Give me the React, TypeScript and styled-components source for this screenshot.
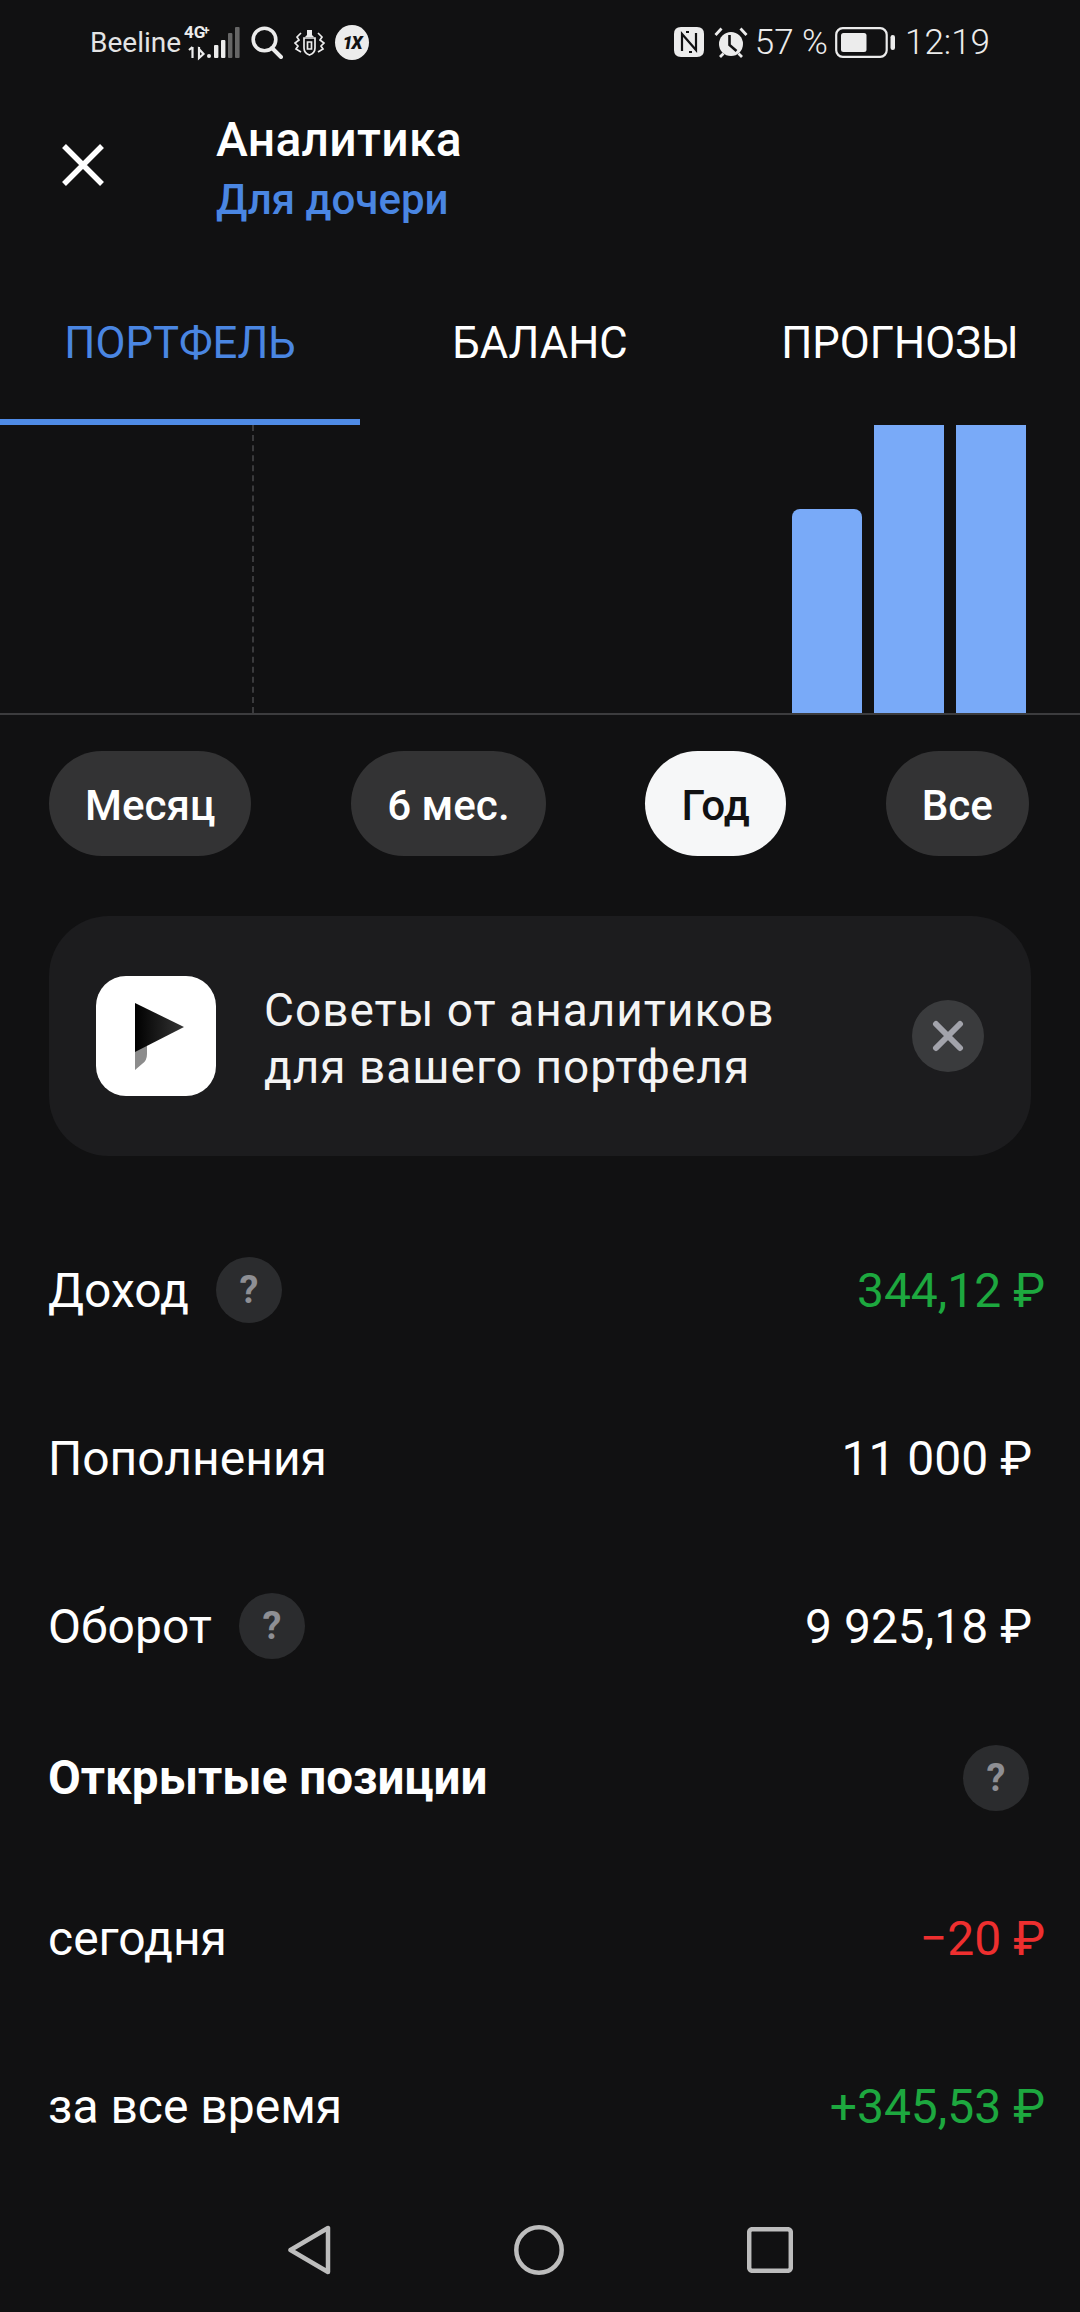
import React from 'react';
import styled, { createGlobalStyle } from 'styled-components';

const Global = createGlobalStyle`
  html, body { margin: 0; padding: 0; background: #111112; }
  * { box-sizing: border-box; }
`;

const Page = styled.div`
  width: 1080px;
  height: 2312px;
  background: #111112;
  color: #fff;
  font-family: Roboto, "Liberation Sans", sans-serif;
  display: flex;
  flex-direction: column;
  overflow: hidden;
`;

const StatusBar = styled.div`
  height: 84px;
  padding: 0 90px 0 90px;
  display: flex;
  align-items: center;
  justify-content: space-between;
  color: #ececec;
`;
const StatusGroup = styled.div`
  display: flex;
  align-items: center;
`;
const Carrier = styled.span`
  font-size: 28px;
  margin-right: 3px;
  color: #e4e4e4;
`;
const StatusText = styled.span`
  font-size: 35px;
  font-weight: 300;
  white-space: nowrap;
`;
const OneX = styled.span`
  width: 34px;
  height: 35px;
  margin-left: 10px;
  border-radius: 50%;
  background: #ececec;
  color: #111112;
  font-size: 18px;
  font-weight: 900;
  font-style: italic;
  letter-spacing: -1px;
  display: flex;
  align-items: center;
  justify-content: center;
`;

const Header = styled.div`
  height: 176px;
  display: flex;
  align-items: center;
  padding-left: 62px;
`;
const CloseSlot = styled.div`
  margin-top: -14px;
  display: flex;
`;
const HeaderTitles = styled.div`
  margin-left: 112px;
  margin-top: -7px;
  display: flex;
  flex-direction: column;
  gap: 9px;
`;
const Title = styled.div`
  font-size: 48px;
  font-weight: 500;
  line-height: 54px;
  letter-spacing: 0.3px;
`;
const Subtitle = styled.div`
  font-size: 42px;
  font-weight: 500;
  line-height: 48px;
  color: #4a86e2;
`;

const Tabs = styled.div`
  height: 165px;
  display: grid;
  grid-template-columns: repeat(3, 360px);
`;
const Tab = styled.div<{ $active?: boolean }>`
  display: flex;
  align-items: center;
  justify-content: center;
  padding-top: 8px;
  font-size: 43.6px;
  color: ${p => (p.$active ? '#4a86e2' : '#fff')};
  border-bottom: 6px solid ${p => (p.$active ? '#4f8be6' : 'transparent')};
`;

const Chart = styled.div`
  position: relative;
  height: 290px;
  padding-right: 54px;
  display: flex;
  justify-content: flex-end;
  align-items: flex-end;
  gap: 12px;
  border-bottom: 2px solid #3c3c3e;
`;
const Dashed = styled.div`
  position: absolute;
  left: 252px;
  top: 0;
  bottom: 0;
  border-left: 2px dashed #3a3a3c;
`;
const Bar = styled.div<{ $h: number; $round?: boolean }>`
  width: 70px;
  height: ${p => p.$h}px;
  background: #79aaf8;
  border-radius: ${p => (p.$round ? '8px 8px 0 0' : '0')};
`;

const Pills = styled.div`
  margin-top: 36px;
  padding: 0 51px 0 49px;
  display: flex;
  justify-content: space-between;
`;
const Pill = styled.div<{ $active?: boolean }>`
  height: 105px;
  padding: 3px 36px 0;
  border-radius: 53px;
  display: flex;
  align-items: center;
  font-size: 42.2px;
  font-weight: 500;
  background: ${p => (p.$active ? '#f6f7f8' : '#333334')};
  color: ${p => (p.$active ? '#111112' : '#fff')};
`;

const Card = styled.div`
  margin: 60px 49px 0;
  height: 240px;
  border-radius: 60px;
  background: #1c1c1e;
  padding: 0 47px;
  display: flex;
  align-items: center;
`;
const AppIcon = styled.div`
  width: 120px;
  height: 120px;
  border-radius: 30px;
  background: #fff;
  flex: none;
  display: flex;
  align-items: center;
  justify-content: center;
`;
const CardText = styled.div`
  margin-left: 48px;
  padding-top: 5px;
  flex: 1;
  font-size: 46px;
  line-height: 57px;
  color: #f4f4f4;
  letter-spacing: 1px;
`;
const CardClose = styled.div`
  width: 72px;
  height: 72px;
  border-radius: 50%;
  background: #3a3b3d;
  display: flex;
  align-items: center;
  justify-content: center;
`;

const Rows = styled.div`
  margin-top: 50px;
  padding: 0 48px 0 48px;
  display: flex;
  flex-direction: column;
`;
const Row = styled.div<{ $h?: number; $pb?: number }>`
  height: ${p => p.$h ?? 168}px;
  padding-bottom: ${p => p.$pb ?? 0}px;
  padding-right: ${p => (p.$pb ? 3 : 0)}px;
  display: flex;
  align-items: center;
  justify-content: space-between;
`;
const RowLabel = styled.div<{ $bold?: boolean }>`
  display: flex;
  align-items: center;
  gap: 27px;
  font-size: ${p => (p.$bold ? 47.6 : 48)}px;
  font-weight: ${p => (p.$bold ? 700 : 400)};
  letter-spacing: 0;
`;
const RowValue = styled.div<{ $color?: string; $shift?: boolean }>`
  font-size: 48px;
  color: ${p => p.$color ?? '#fff'};
  margin-right: ${p => (p.$shift ? -13 : 0)}px;
  white-space: nowrap;
`;
const Help = styled.span`
  width: 66px;
  height: 66px;
  border-radius: 50%;
  background: #2b2c2e;
  color: #8e8f94;
  font-size: 38px;
  font-weight: 700;
  display: inline-flex;
  align-items: center;
  justify-content: center;
`;

const NavBar = styled.div`
  margin-top: auto;
  height: 112px;
  display: flex;
  align-items: flex-start;
  justify-content: center;
  gap: 183px;
`;

const NavIcon = styled.svg<{ $top?: number }>`
  display: block;
  margin-top: ${p => p.$top ?? 25}px;
`;

const Signal = () => (
  <svg width="58" height="42" viewBox="0 -4 58 42">
    <text x="0" y="13" fontSize="17" fontWeight="700" fill="#ececec" fontFamily="Roboto">4G</text>
    <text x="19" y="10" fontSize="12" fontWeight="700" fill="#ececec" fontFamily="Roboto">+</text>
    <path d="M8.5 22v11M5 25l3.5-3M15 22v11M15 24l4.5 5-4.5 4z" stroke="#ececec" strokeWidth="2.2" fill="none" />
    <rect x="23" y="29" width="4" height="4" rx="2" fill="#ececec" />
    <rect x="30" y="20" width="4.4" height="13" rx="1" fill="#ececec" />
    <rect x="37" y="15" width="4.4" height="18" rx="1" fill="#ececec" />
    <rect x="44" y="8" width="4.4" height="25" rx="1" fill="#666" />
    <rect x="51" y="2" width="4.6" height="31" rx="1" fill="#666" />
  </svg>
);

const Search = () => (
  <svg width="32" height="33" viewBox="0 0 32 33" style={{ marginLeft: 9 }}>
    <circle cx="13.5" cy="13.5" r="11.3" fill="none" stroke="#ececec" strokeWidth="3.6" />
    <path d="M21 22l9 9" stroke="#ececec" strokeWidth="4" strokeLinecap="round" />
  </svg>
);

const Crest = () => (
  <svg width="31" height="27" viewBox="0 0 31 27" fill="none" stroke="#ececec" strokeWidth="1.7" style={{ marginLeft: 11 }}>
    <path d="M13 1h5v5l2 2h-9l2-2z" fill="#ececec" stroke="none" />
    <path d="M10 9h11v10q0 5-5.5 7q-5.5-2-5.5-7z" />
    <path d="M13.5 13h4v7h-4z" />
    <path d="M7 4L3 8l2 3-4 3 3 3-2 3 5 3M24 4l4 4-2 3 4 3-3 3 2 3-5 3" />
  </svg>
);

const Nfc = () => (
  <svg width="30" height="30" viewBox="0 0 30 30" style={{ marginRight: 10 }}>
    <path d="M7 0h3l10 10v20h-13q-7 0-7-7V7q0-7 7-7z" fill="#ececec" />
    <path d="M23 30h-3L10 20V0h13q7 0 7 7v16q0 7-7 7z" fill="#ececec" />
    <path d="M8 24V7l14 16V6" fill="none" stroke="#111112" strokeWidth="2.2" />
    <path d="M12 5h3M15 25h3" stroke="#111112" strokeWidth="2" />
  </svg>
);

const Alarm = () => (
  <svg width="34" height="31" viewBox="0 0 34 31" style={{ marginRight: 7 }}>
    <circle cx="17" cy="17" r="12" fill="#ececec" />
    <path d="M15.5 8v10l7 6" fill="none" stroke="#111112" strokeWidth="2.6" />
    <path d="M1.5 8l6-6.5M32.5 8l-6-6.5M6 30l3.5-3.5M28 30l-3.5-3.5" stroke="#ececec" strokeWidth="2.8" />
  </svg>
);

const Battery = () => (
  <svg width="60" height="31" viewBox="0 0 60 31" style={{ margin: '0 10px 0 7px' }}>
    <rect x="1.2" y="1.2" width="50.5" height="28.6" rx="6.5" fill="none" stroke="#ececec" strokeWidth="2.2" />
    <rect x="6" y="6" width="25.5" height="19" rx="2.5" fill="#ececec" />
    <rect x="55.5" y="8" width="4.5" height="15" rx="2.2" fill="#ececec" />
  </svg>
);

const CloseX = () => (
  <svg width="42" height="42" viewBox="0 0 42 42">
    <path d="M2 2l38 38M40 2L2 40" stroke="#fff" strokeWidth="5.5" />
  </svg>
);

const SmallX = () => (
  <svg width="32" height="32" viewBox="0 0 32 32">
    <path d="M4 4l24 24M28 4L4 28" stroke="#a2a3ab" strokeWidth="6" strokeLinecap="round" />
  </svg>
);

const PlayLogo = () => (
  <svg width="49" height="67" viewBox="0 0 49 67" style={{ marginLeft: 7 }}>
    <defs>
      <linearGradient id="pg" x1="0" y1="0" x2="1" y2="0">
        <stop offset="0" stopColor="#000" />
        <stop offset="1" stopColor="#363636" />
      </linearGradient>
    </defs>
    <path d="M0 67V48L12 40v11q0 7-5 10z" fill="#8c8c8c" />
    <path d="M0 0l49 24L0 49z" fill="url(#pg)" />
  </svg>
);

const Back = () => (
  <NavIcon width="44" height="50" viewBox="0 0 44 50">
    <path d="M41 3v44L3.5 25z" fill="none" stroke="#bdbdbd" strokeWidth="4.5" strokeLinejoin="round" />
  </NavIcon>
);
const Home = () => (
  <NavIcon width="50" height="50" viewBox="0 0 50 50">
    <circle cx="25" cy="25" r="22.7" fill="none" stroke="#bdbdbd" strokeWidth="4.5" />
  </NavIcon>
);
const Recent = () => (
  <NavIcon $top={27} width="46" height="46" viewBox="0 0 46 46">
    <rect x="2.2" y="2.2" width="41.6" height="41.6" rx="3" fill="none" stroke="#bdbdbd" strokeWidth="4.5" />
  </NavIcon>
);

export default function App() {
  return (
    <Page>
      <Global />
      <StatusBar>
        <StatusGroup>
          <Carrier>Beeline</Carrier>
          <Signal />
          <Search />
          <Crest />
          <OneX>1X</OneX>
        </StatusGroup>
        <StatusGroup>
          <Nfc />
          <Alarm />
          <StatusText>57 %</StatusText>
          <Battery />
          <StatusText>12:19</StatusText>
        </StatusGroup>
      </StatusBar>

      <Header>
        <CloseSlot><CloseX /></CloseSlot>
        <HeaderTitles>
          <Title>Аналитика</Title>
          <Subtitle>Для дочери</Subtitle>
        </HeaderTitles>
      </Header>

      <Tabs>
        <Tab $active>ПОРТФЕЛЬ</Tab>
        <Tab>БАЛАНС</Tab>
        <Tab>ПРОГНОЗЫ</Tab>
      </Tabs>

      <Chart>
        <Dashed />
        <Bar $h={204} $round />
        <Bar $h={288} />
        <Bar $h={288} />
      </Chart>

      <Pills>
        <Pill>Месяц</Pill>
        <Pill>6 мес.</Pill>
        <Pill $active>Год</Pill>
        <Pill>Все</Pill>
      </Pills>

      <Card>
        <AppIcon><PlayLogo /></AppIcon>
        <CardText>Советы от аналитиков<br />для вашего портфеля</CardText>
        <CardClose><SmallX /></CardClose>
      </Card>

      <Rows>
        <Row>
          <RowLabel>Доход<Help>?</Help></RowLabel>
          <RowValue $color="#1da83f" $shift>344,12 ₽</RowValue>
        </Row>
        <Row>
          <RowLabel>Пополнения</RowLabel>
          <RowValue>11 000 ₽</RowValue>
        </Row>
        <Row>
          <RowLabel>Оборот<Help>?</Help></RowLabel>
          <RowValue>9 925,18 ₽</RowValue>
        </Row>
        <Row $h={144} $pb={8}>
          <RowLabel $bold>Открытые позиции</RowLabel>
          <Help>?</Help>
        </Row>
        <Row>
          <RowLabel>сегодня</RowLabel>
          <RowValue $color="#ee2f2f" $shift>−20 ₽</RowValue>
        </Row>
        <Row>
          <RowLabel>за все время</RowLabel>
          <RowValue $color="#1da83f" $shift>+345,53 ₽</RowValue>
        </Row>
      </Rows>

      <NavBar>
        <Back />
        <Home />
        <Recent />
      </NavBar>
    </Page>
  );
}
